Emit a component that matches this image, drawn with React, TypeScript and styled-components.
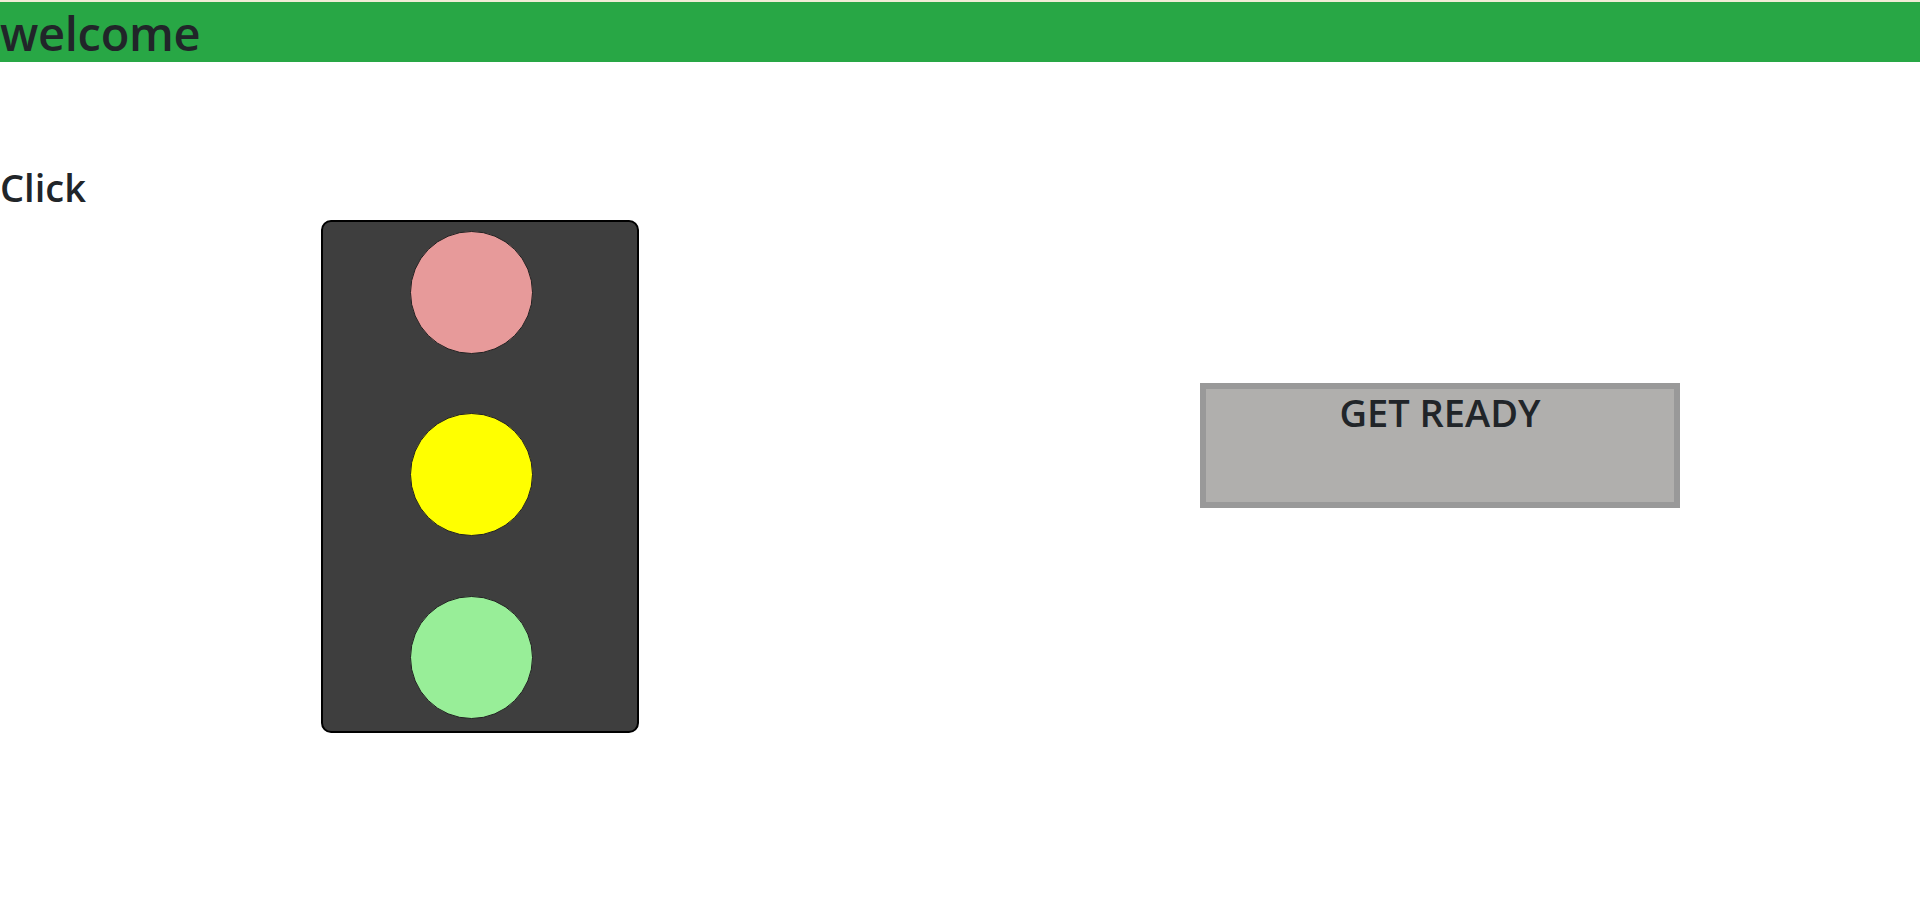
import React from 'react';
import styled, { createGlobalStyle } from 'styled-components';

const GlobalStyle = createGlobalStyle`
  body {
    margin: 0;
    background: #fff;
    color: #212529;
    font-family: "Open Sans", "Noto Sans", sans-serif;
  }
`;

const lights = [
  { key: 'red', color: '#e79a9a' },
  { key: 'yellow', color: '#ffff00' },
  { key: 'green', color: '#98ee98' },
];

function App() {
  return (
    <>
      <GlobalStyle />
      <TopLine />
      <Header>
        <Title>welcome</Title>
      </Header>
      <Main>
        <Heading>Click</Heading>
        <Row>
          <Col>
            <TrafficLight>
              {lights.map((l) => (
                <Lamp key={l.key} color={l.color} />
              ))}
            </TrafficLight>
          </Col>
          <Col>
            <StatusBox>GET READY</StatusBox>
          </Col>
        </Row>
      </Main>
    </>
  );
}

export default App;

const TopLine = styled.div`
height: 2px;
background: #f1ecd6;
`;

const Header = styled.header`
background: #28a745;
`;

const Title = styled.h1`
margin: 0;
padding-top: 3px;
font-size: 47px;
font-weight: 600;
letter-spacing: -0.3px;
line-height: 57px;
color: #212529;
`;

const Main = styled.main`
padding-top: 103px;
`;

const Heading = styled.h2`
margin: 0;
font-size: 38px;
font-weight: 600;
line-height: 1.2;
`;

const Row = styled.div`
display: grid;
grid-template-columns: 1fr 1fr;
margin-top: 9px;
`;

const Col = styled.div`
display: flex;
justify-content: center;
align-items: flex-start;
`;

const TrafficLight = styled.div`
box-sizing: border-box;
width: 318px;
height: 513px;
background: #3e3e3e;
border: 2px solid #000;
border-radius: 10px;
display: flex;
flex-direction: column;
align-items: flex-start;
padding: 9px 0 0 87px;
gap: 59.5px;
`;

const Lamp = styled.div<{ color: string }>`
box-sizing: border-box;
width: 123px;
height: 123px;
border-radius: 50%;
border: 1.5px solid #222;
background: ${(p) => p.color};
`;

const StatusBox = styled.div`
box-sizing: border-box;
width: 480px;
height: 125px;
margin-top: 163px;
background: #b0afad;
border: 6px solid #999999;
padding-top: 1px;
text-align: center;
font-size: 38px;
font-weight: 600;
line-height: 1.2;
color: #212529;
`;
